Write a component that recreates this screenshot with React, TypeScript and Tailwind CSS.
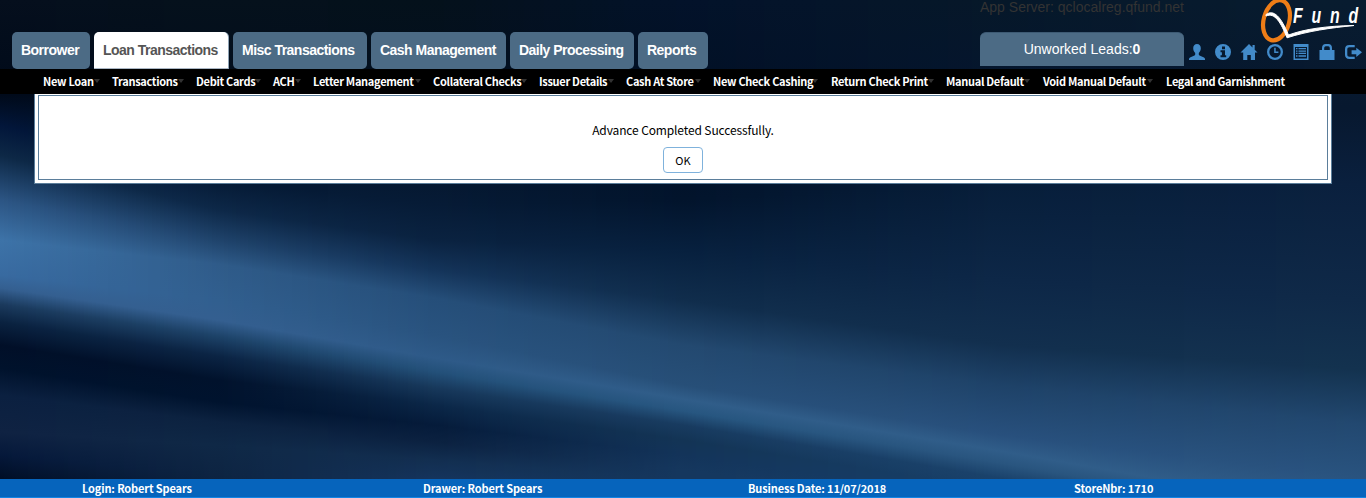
import React from "react";

const tabs = [
  { label: "Borrower", cls: "w-[78px] mr-1 bg-[#4c6b85] text-white" },
  { label: "Loan Transactions", cls: "w-[134px] mr-[5px] bg-white text-[#555] rounded-b-none shadow-[1px_0_0_#8fa3b5,inset_0_-1px_0_#aab6c4]" },
  { label: "Misc Transactions", cls: "w-[134px] mr-1 bg-[#4c6b85] text-white" },
  { label: "Cash Management", cls: "w-[135px] mr-1 bg-[#4c6b85] text-white" },
  { label: "Daily Processing", cls: "w-[124px] mr-1 bg-[#4c6b85] text-white" },
  { label: "Reports", cls: "w-[70px] bg-[#4c6b85] text-white" },
];

const menu = [
  { label: "New Loan", cell: "w-[69px]", text: "w-[51px]" },
  { label: "Transactions", cell: "w-[84px]", text: "w-[66px]" },
  { label: "Debit Cards", cell: "w-[77px]", text: "w-[59px]" },
  { label: "ACH", cell: "w-[40px]", text: "w-[22px]" },
  { label: "Letter Management", cell: "w-[120px]", text: "w-[102px]" },
  { label: "Collateral Checks", cell: "w-[106px]", text: "w-[88px]" },
  { label: "Issuer Details", cell: "w-[87px]", text: "w-[69px]" },
  { label: "Cash At Store", cell: "w-[87px]", text: "w-[69px]" },
  { label: "New Check Cashing", cell: "w-[118px]", text: "w-[99px]" },
  { label: "Return Check Print", cell: "w-[115px]", text: "w-[97px]" },
  { label: "Manual Default", cell: "w-[97px]", text: "w-[78px]" },
  { label: "Void Manual Default", cell: "w-[123px]", text: "w-[104px]" },
  { label: "Legal and Garnishment", cell: "w-[130px]", text: "w-[116px]" },
];

const icons = [
  { name: "User", d: "M8 0c2.400 0 3.800 1.700 3.800 4.200 0 2-.9 3.800-2 4.700v1.500c0 .5.300.8.700 1l4.500 2c.7.300 1 .9 1 1.600v1H0v-1c0-.7.300-1.300 1-1.600l4.500-2c.4-.2.700-.5.700-1V8.900C5.100 8 4.200 6.200 4.200 4.200 4.200 1.700 5.600 0 8 0z" },
  { name: "Information", d: "M8 0a8 8 0 1 0 0 16A8 8 0 0 0 8 0zM7 2.500h3v2.700H7zM5.500 6.300H10v5h1.200v2H5.500v-2h1.400v-3H5.500z" },
  { name: "Home", d: "M8 0l3.500 3.500V1h2.200v4.700L16.500 8.600H14V16H9.800v-5H6.300v5H2.200V8.600H-.5z" },
  { name: "Clock", d: "M8 0a8 8 0 1 0 0 16A8 8 0 0 0 8 0zm0 2.300a5.700 5.700 0 1 1 0 11.400A5.700 5.700 0 0 1 8 2.300zM7.200 3.800v5.200h4.200V7.500H8.700V3.800z" },
  { name: "List", d: "M.5 0h15v16H.5zM2 3v11.500h12V3zM3 4h1.500v1.300H3zm2.500 0H13v1.300H5.500zM3 6.400h1.500v1.300H3zm2.500 0H13v1.300H5.500zM3 8.800h1.500v1.300H3zm2.500 0H13v1.300H5.500zM3 11.200h1.500v1.600H3zm2.500 0H13v1.600H5.500z" },
  { name: "Lock", d: "M.5 6H3V4c0-2.400 1.500-4 3.500-4h3C11.500 0 13 1.600 13 4v2h2.500v10H.5zM5.200 6h5.600V4.200c0-1.300-.7-2-1.600-2H6.800c-.9 0-1.600.7-1.600 2z" },
  { name: "Log out", d: "M9.700 1v2.300H4.500C3 3.300 2.300 4 2.300 5.500v5c0 1.500.7 2.200 2.200 2.200h5.200V15H4.300C1.500 15 0 13.400 0 10.800V5.200C0 2.600 1.500 1 4.300 1zM11.300 3.700L17 8.300l-5.700 4.600V10.200H6.600V6.300h4.700z" },
];

/* Light-beam mesh: each column lists the same sixteen contours, top to bottom. */
type Column = { x: number; stops: [number, string][] };

const mesh: Column[] = [
  { x: 0, stops: [[0, "050f1d"], [95, "000a1a"], [125, "02163a"], [155, "0d2846"], [200, "2c5584"], [240, "3d73a8"], [275, "386aa0"], [288, "345f90"], [304, "1b3a5d"], [322, "0a2240"], [345, "010f28"], [368, "00122c"], [395, "0b2040"], [432, "0f2242"], [455, "05183a"], [478, "000e26"]] },
  { x: 218, stops: [[0, "05111c"], [95, "020d1c"], [180, "051a35"], [210, "0d2848"], [240, "1f436b"], [264, "2f5b89"], [300, "315f8f"], [320, "345f90"], [336, "1d4369"], [356, "0b2444"], [380, "01122c"], [402, "00132e"], [422, "0c2240"], [445, "0f2846"], [475, "0d2442"], [498, "0b213e"]] },
  { x: 435, stops: [[0, "04111b"], [110, "020f20"], [205, "061b36"], [240, "0a2240"], [270, "14345a"], [298, "254e79"], [335, "29537f"], [358, "2e5a88"], [372, "235079"], [388, "17385b"], [405, "0b2748"], [425, "051b3a"], [442, "0b2140"], [460, "122e50"], [478, "15345c"], [498, "15345c"]] },
  { x: 683, stops: [[0, "03122a"], [110, "010f24"], [200, "02142c"], [250, "07203e"], [300, "102d4c"], [345, "234970"], [385, "274f78"], [399, "305d89"], [411, "275680"], [425, "183b60"], [440, "133455"], [455, "13345a"], [470, "15375e"], [480, "15375e"], [490, "15375e"], [500, "15375e"]] },
  { x: 1000, stops: [[0, "061829"], [110, "041530"], [184, "071e3a"], [280, "0d2747"], [345, "122f4e"], [385, "1e4268"], [435, "28507d"], [451, "305d89"], [463, "29557f"], [478, "1a426b"], [490, "18406a"], [500, "18406a"], [510, "18406a"], [520, "18406a"], [530, "18406a"], [540, "18406a"]] },
  { x: 1366, stops: [[0, "081c30"], [110, "07182f"], [184, "0a203e"], [300, "0f2948"], [370, "13324f"], [425, "224870"], [478, "29537f"], [515, "305d89"], [527, "29557f"], [540, "1a426b"], [550, "18406a"], [560, "18406a"], [570, "18406a"], [580, "18406a"], [590, "18406a"], [600, "18406a"]] },
];

const STRIP = 4;
const DEPTH = 600;

function mix(a: string, b: string, t: number) {
  const channel = (i: number) => {
    const from = parseInt(a.slice(i, i + 2), 16);
    const to = parseInt(b.slice(i, i + 2), 16);
    return Math.round(from + (to - from) * t);
  };
  return `rgb(${channel(0)},${channel(2)},${channel(4)})`;
}

const strips = Array.from({ length: Math.ceil(1366 / STRIP) }, (_, n) => {
  const x = n * STRIP;
  const k = Math.max(0, mesh.findIndex((c, i) => i < mesh.length - 1 && x < mesh[i + 1].x));
  const left = mesh[k];
  const right = mesh[k + 1];
  const t = (x + STRIP / 2 - left.x) / (right.x - left.x);
  return {
    x,
    stops: left.stops.map(([y, c], i) => ({
      offset: (y + (right.stops[i][0] - y) * t) / DEPTH,
      color: mix(c, right.stops[i][1], t),
    })),
  };
});

function Backdrop() {
  return (
    <svg className="absolute inset-0 -z-10" width="1366" height="498" viewBox="0 0 1366 498" aria-hidden="true">
      <defs>
        {strips.map((s) => (
          <linearGradient key={s.x} id={`s${s.x}`} gradientUnits="userSpaceOnUse" x1="0" y1="0" x2="0" y2={DEPTH}>
            {s.stops.map((p, i) => (
              <stop key={i} offset={p.offset} stopColor={p.color} />
            ))}
          </linearGradient>
        ))}
      </defs>
      {strips.map((s) => (
        <rect key={s.x} x={s.x} y="0" width={STRIP} height="498" fill={`url(#s${s.x})`} />
      ))}
    </svg>
  );
}

function Logo() {
  return (
    <div className="relative h-[43px] w-[106px]">
      <svg className="absolute inset-0" width="106" height="43" viewBox="0 0 106 43" aria-label="QFund">
        <ellipse cx="16.500" cy="20.300" rx="12.800" ry="20.500" transform="rotate(15 16.500 20.300)" fill="none" stroke="#ee7d17" strokeWidth="4.200" />
        <path d="M6 14.500C14 9 21 17 28.500 35C45 29 66 26 94 25.500C70 28 48 31 27 37.800C21 23 15 12 6 16z" fill="#fff" stroke="#fff" strokeWidth="1" />
      </svg>
      <span className="absolute left-[33px] top-[4px] origin-left scale-x-[0.72] whitespace-nowrap text-[22px] font-bold italic leading-6 tracking-[12.200px] text-white">
        Fun<span className="tracking-normal">d</span>
      </span>
    </div>
  );
}

export default function App() {
  return (
    <div className="relative isolate flex h-[498px] w-[1366px] flex-col overflow-hidden font-['Liberation_Sans',sans-serif]">
      <Backdrop />
      <header className="flex h-[69px] shrink-0 justify-between pl-3">
        <nav className="flex items-end">
          {tabs.map((t) => (
            <a key={t.label} className={`flex h-[37px] items-center whitespace-nowrap rounded-[5px] pl-[9px] text-[14px] font-bold tracking-[-0.52px] ${t.cls}`}>{t.label}</a>
          ))}
        </nav>
        <div className="flex">
          <div className="mr-[5px] w-[204px]">
            <div className="h-8 whitespace-nowrap text-[14px] leading-[15px] text-[#333]">App Server: qclocalreg.qfund.net</div>
            <div className="flex h-[34px] items-center justify-center rounded-t-[6px] border-t border-[#3d5a73] bg-[#4c6b85] text-[14px] text-white">
              Unworked Leads:<b>0</b>
            </div>
          </div>
          <div className="flex w-[177px] flex-col">
            <div className="flex justify-end"><Logo /></div>
            <div className="mt-px flex gap-[10px]">
              {icons.map((i) => (
                <svg key={i.name} aria-label={i.name} width="16" height="16" viewBox="0 0 16 16" className="shrink-0 overflow-visible" fill="#428bca" fillRule="evenodd"><path d={i.d} /></svg>
              ))}
            </div>
          </div>
        </div>
      </header>
      <nav className="flex h-[25px] shrink-0 items-center bg-black pb-px pl-[43px] font-['Noto_Sans_CJK_SC',sans-serif] text-[11px] font-bold leading-[18px] tracking-[-0.3px] text-white">
        {menu.map((m, i) => (
          <a key={m.label} className={`flex shrink-0 items-center whitespace-nowrap ${m.cell}`}>
            <span className={`relative z-10 ${m.text}`}>{m.label}</span>
            {i < menu.length - 1 && <i className="h-0 w-0 shrink-0 border-x-[3px] border-t-4 border-x-transparent border-t-[#333]" />}
          </a>
        ))}
      </nav>
      <main className="mx-[34px] flex h-[90px] shrink-0 border border-t-0 border-[#5b7e9b] bg-white px-[3px] pb-[3px] pt-px">
        <section className="flex flex-1 flex-col items-center border border-[#5b7e9b] pt-6 font-['Noto_Sans_CJK_SC',sans-serif] text-[12px] text-black">
          <p className="h-[27px] leading-5 tracking-[-0.13px]">Advance Completed Successfully.</p>
          <button className="h-[26px] w-10 rounded border border-[#7fb2dc] bg-white text-[11px] leading-4">OK</button>
        </section>
      </main>
      <footer className="mt-auto flex h-[19px] shrink-0 border-b border-[#1284e4] bg-[#0664bc] pl-[82px] font-['Noto_Sans_CJK_SC',sans-serif] text-[11px] font-bold leading-[19px] tracking-[-0.14px] text-white">
        <span className="w-[341px]">Login: Robert Spears</span>
        <span className="w-[325px]">Drawer: Robert Spears</span>
        <span className="w-[326px]">Business Date: 11/07/2018</span>
        <span>StoreNbr: 1710</span>
      </footer>
    </div>
  );
}
